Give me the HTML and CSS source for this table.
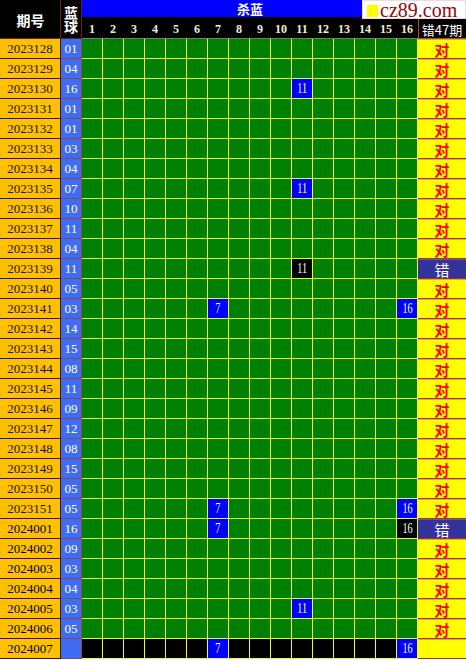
FILE: index.html
```html
<!DOCTYPE html>
<html lang="zh">
<head>
<meta charset="utf-8">
<title>杀蓝</title>
<link rel="stylesheet" href="styles.css">
</head>
<body>
<div class="sheet">
  <div class="head">
    <div class="h-qh">期号</div>
    <div class="h-ball"><span>蓝球</span></div>
    <div class="h-title">杀蓝</div>
    <div class="h-nums">
      <span>1</span><span>2</span><span>3</span><span>4</span><span>5</span><span>6</span><span>7</span><span>8</span>
      <span>9</span><span>10</span><span>11</span><span>12</span><span>13</span><span>14</span><span>15</span><span>16</span>
    </div>
    <div class="h-res">错47期</div>
    <div class="logo"><i class="logo-sq"></i><span>cz89.com</span></div>
  </div>

  <div class="row"><div class="qh">2023128</div><div class="ball">01</div><div class="kill"></div><div class="res">对</div></div>
  <div class="row"><div class="qh">2023129</div><div class="ball">04</div><div class="kill"></div><div class="res">对</div></div>
  <div class="row"><div class="qh">2023130</div><div class="ball">16</div><div class="kill"><b class="hit c11"><span>11</span></b></div><div class="res">对</div></div>
  <div class="row"><div class="qh">2023131</div><div class="ball">01</div><div class="kill"></div><div class="res">对</div></div>
  <div class="row"><div class="qh">2023132</div><div class="ball">01</div><div class="kill"></div><div class="res">对</div></div>
  <div class="row"><div class="qh">2023133</div><div class="ball">03</div><div class="kill"></div><div class="res">对</div></div>
  <div class="row"><div class="qh">2023134</div><div class="ball">04</div><div class="kill"></div><div class="res">对</div></div>
  <div class="row"><div class="qh">2023135</div><div class="ball">07</div><div class="kill"><b class="hit c11"><span>11</span></b></div><div class="res">对</div></div>
  <div class="row"><div class="qh">2023136</div><div class="ball">10</div><div class="kill"></div><div class="res">对</div></div>
  <div class="row"><div class="qh">2023137</div><div class="ball">11</div><div class="kill"></div><div class="res">对</div></div>
  <div class="row"><div class="qh">2023138</div><div class="ball">04</div><div class="kill"></div><div class="res">对</div></div>
  <div class="row"><div class="qh">2023139</div><div class="ball">11</div><div class="kill"><b class="hit miss c11"><span>11</span></b></div><div class="res err">错</div></div>
  <div class="row"><div class="qh">2023140</div><div class="ball">05</div><div class="kill"></div><div class="res">对</div></div>
  <div class="row"><div class="qh">2023141</div><div class="ball">03</div><div class="kill"><b class="hit c7"><span>7</span></b><b class="hit c16"><span>16</span></b></div><div class="res">对</div></div>
  <div class="row"><div class="qh">2023142</div><div class="ball">14</div><div class="kill"></div><div class="res">对</div></div>
  <div class="row"><div class="qh">2023143</div><div class="ball">15</div><div class="kill"></div><div class="res">对</div></div>
  <div class="row"><div class="qh">2023144</div><div class="ball">08</div><div class="kill"></div><div class="res">对</div></div>
  <div class="row"><div class="qh">2023145</div><div class="ball">11</div><div class="kill"></div><div class="res">对</div></div>
  <div class="row"><div class="qh">2023146</div><div class="ball">09</div><div class="kill"></div><div class="res">对</div></div>
  <div class="row"><div class="qh">2023147</div><div class="ball">12</div><div class="kill"></div><div class="res">对</div></div>
  <div class="row"><div class="qh">2023148</div><div class="ball">08</div><div class="kill"></div><div class="res">对</div></div>
  <div class="row"><div class="qh">2023149</div><div class="ball">15</div><div class="kill"></div><div class="res">对</div></div>
  <div class="row"><div class="qh">2023150</div><div class="ball">05</div><div class="kill"></div><div class="res">对</div></div>
  <div class="row"><div class="qh">2023151</div><div class="ball">05</div><div class="kill"><b class="hit c7"><span>7</span></b><b class="hit c16"><span>16</span></b></div><div class="res">对</div></div>
  <div class="row"><div class="qh new">2024001</div><div class="ball">16</div><div class="kill"><b class="hit c7"><span>7</span></b><b class="hit miss c16"><span>16</span></b></div><div class="res err">错</div></div>
  <div class="row"><div class="qh new">2024002</div><div class="ball">09</div><div class="kill"></div><div class="res">对</div></div>
  <div class="row"><div class="qh new">2024003</div><div class="ball">03</div><div class="kill"></div><div class="res">对</div></div>
  <div class="row"><div class="qh new">2024004</div><div class="ball">04</div><div class="kill"></div><div class="res">对</div></div>
  <div class="row"><div class="qh new">2024005</div><div class="ball">03</div><div class="kill"><b class="hit c11"><span>11</span></b></div><div class="res">对</div></div>
  <div class="row"><div class="qh new">2024006</div><div class="ball">05</div><div class="kill"></div><div class="res">对</div></div>
  <div class="row"><div class="qh new">2024007</div><div class="ball"></div><div class="kill pending"><b class="hit c7"><span>7</span></b><b class="hit c16"><span>16</span></b></div><div class="res"></div></div>
</div>
</body>
</html>
```
FILE: styles.css
```css
* { box-sizing: border-box; margin: 0; padding: 0; }

html, body { background: #ffffff; }

body {
  width: 466px;
  font-family: "Liberation Serif", "Noto Sans CJK SC", serif;
}

.sheet { width: 466px; }

/* ---------- header ---------- */
.head {
  position: relative;
  display: grid;
  grid-template-columns: 61px 21px 336px 48px;
  grid-template-rows: 17px 22px;
  background: #000;
}

.h-qh {
  grid-column: 1;
  grid-row: 1 / 3;
  display: flex;
  align-items: center;
  justify-content: center;
  color: #fff;
  font: bold 14px "Noto Sans CJK SC", sans-serif;
  box-shadow: inset -1px -1px 0 #6b2020;
}

.h-ball {
  grid-column: 2;
  grid-row: 1 / 3;
  display: flex;
  align-items: center;
  justify-content: center;
  padding-right: 1px;
  color: #fff;
  box-shadow: inset -1px -1px 0 #6b2020;
}

.h-ball span {
  writing-mode: vertical-rl;
  text-orientation: upright;
  font: bold 14px/16px "Noto Sans CJK SC", sans-serif;
}

.h-title {
  grid-column: 3;
  grid-row: 1;
  background: #0000ff;
  color: #fff;
  display: flex;
  align-items: center;
  justify-content: center;
  font: bold 13px/15px "Noto Sans CJK SC", sans-serif;
}

.h-nums {
  grid-column: 3;
  grid-row: 2;
  display: grid;
  grid-template-columns: repeat(16, 20px);
  column-gap: 1px;
  align-items: center;
  padding-top: 3px;
  box-shadow: inset 0 -1px 0 #7a7a7a;
}

.h-nums span {
  text-align: center;
  color: #f2f0d8;
  font: bold 12px/13px "Liberation Serif", serif;
}

.h-res {
  grid-column: 4;
  grid-row: 2;
  display: flex;
  align-items: center;
  justify-content: center;
  color: #fff;
  font: 13px/15px "Noto Sans CJK SC", sans-serif;
  box-shadow: inset 1px -1px 0 #a0522d;
  padding-top: 3px;
}

.logo {
  position: absolute;
  left: 362px;
  top: 0;
  width: 104px;
  height: 19px;
  background: #fff;
  box-shadow: inset 0 0 0 1px #ecdcdc;
  display: flex;
  align-items: center;
  gap: 2px;
  padding-left: 5px;
  color: #930808;
  font: 20px/18px "Liberation Serif", serif;
  overflow: hidden;
}

.logo-sq {
  display: block;
  width: 11px;
  height: 12px;
  background: #ffff00;
  margin-top: 3px;
}

/* ---------- rows ---------- */
.row {
  display: grid;
  grid-template-columns: 61px 21px 336px 48px;
  grid-template-rows: 20px;
  height: 20px;
}

.qh {
  background: #ffc000;
  box-shadow: inset -1px -1px 0 #2a1a00;
  display: flex;
  align-items: center;
  justify-content: center;
  padding: 0 1px 1px 0;
  color: #1c1408;
  font: 13px/15px "Liberation Serif", serif;
}

.qh.new { color: #000; }

.ball {
  background: #3f6cf2;
  box-shadow: inset -1px -1px 0 #8a4a4a;
  display: flex;
  align-items: center;
  justify-content: center;
  padding: 0 1px 1px 0;
  color: #fff;
  font: 13px/15px "Liberation Serif", serif;
}

.kill {
  display: grid;
  grid-template-columns: repeat(16, 20px);
  grid-template-rows: 19px;
  column-gap: 1px;
  background-color: #008000;
  background-image:
    linear-gradient(to bottom, transparent 19px, #f5f53a 19px),
    repeating-linear-gradient(to right, transparent 0 20px, #f5f53a 20px 21px);
}

.kill.pending { background-color: #000; }

.hit {
  grid-row: 1;
  background: #0000ff;
  color: #fff;
  display: flex;
  align-items: center;
  justify-content: center;
  font: 15px/17px "Liberation Serif", serif;
}

.hit span { display: inline-block; transform: scaleX(0.68); }

.hit.miss { background: #000; }

.c7 { grid-column: 7; }
.c11 { grid-column: 11; }
.c16 { grid-column: 16; }

.res {
  background: #ffff00;
  box-shadow: inset 0 1px 0 #f2a23a, inset 0 -1px 0 #a8302a;
  display: flex;
  align-items: center;
  justify-content: center;
  color: #ff0000;
  font: bold 15px/17px "Noto Sans CJK SC", sans-serif;
}

.res.err {
  background: #333399;
  color: #fff;
  font-weight: normal;
  box-shadow: inset 0 1px 0 #6a5a9a, inset 0 -1px 0 #a8302a;
}
```
